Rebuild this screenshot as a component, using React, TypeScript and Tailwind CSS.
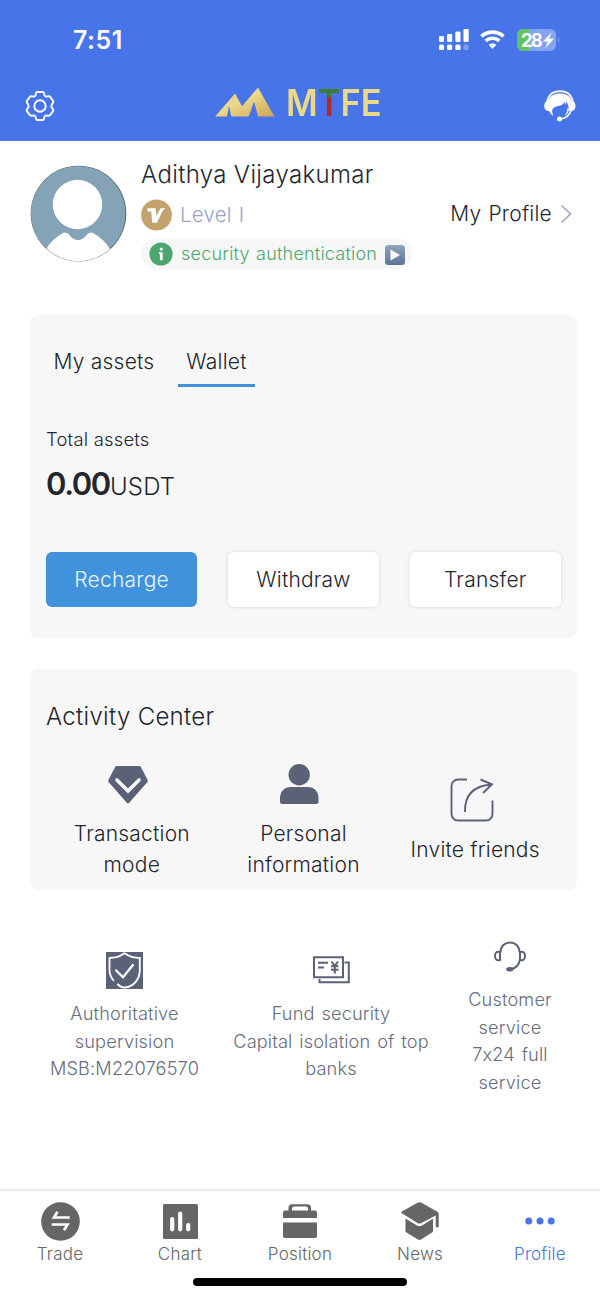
import type { ReactNode } from "react";

const actions = ["Recharge", "Withdraw", "Transfer"];

const activities = [
  { lines: ["Transaction", "mode"], icon: <DiamondIcon /> },
  { lines: ["Personal", "information"], icon: <PersonIcon /> },
  { lines: ["Invite friends"], icon: <ShareIcon /> },
];

const features = [
  {
    lines: ["Authoritative", "supervision", "MSB:M22076570"],
    icon: <ShieldIcon />,
    width: "w-[187px]",
  },
  {
    lines: ["Fund security", "Capital isolation of top", "banks"],
    icon: <BanknoteIcon />,
    width: "w-[226px]",
  },
  {
    lines: ["Customer", "service", "7x24 full", "service"],
    icon: <HeadsetIcon />,
    width: "w-[132px]",
  },
];

const tabs = [
  { label: "Trade", icon: <TradeIcon /> },
  { label: "Chart", icon: <ChartIcon /> },
  { label: "Position", icon: <PositionIcon /> },
  { label: "News", icon: <NewsIcon /> },
  { label: "Profile", icon: <DotsIcon />, active: true },
];

function DiamondIcon() {
  return (
    <svg width="40" height="39" viewBox="0 0 40 39">
      <path
        d="M8.5 1h23l1.2.7L39.7 15 39.5 17 21.2 37.8q-1.2 1.2-2.4 0L.5 17 .3 15 7.3 1.7z"
        fill="#5b6278"
      />
      <path
        d="M9 15 20 26 31 15"
        fill="none"
        stroke="#f7f7f7"
        strokeWidth="3.600"
        strokeLinecap="round"
      />
    </svg>
  );
}

function PersonIcon() {
  return (
    <svg width="39" height="40" viewBox="0 0 39 40" fill="#5b6278">
      <circle cx="19.2" cy="10.7" r="10.7" />
      <path d="M10 23h18.5A10 10 0 0 1 38.500 33v4.500a2.500 2.500 0 0 1-2.500 2.500H2.500A2.500 2.500 0 0 1 0 37.500V33A10 10 0 0 1 10 23z" />
    </svg>
  );
}

function ShareIcon() {
  return (
    <svg
      width="44"
      height="44"
      viewBox="0 0 44 44"
      fill="none"
      stroke="#5b6278"
      strokeWidth="1.9"
    >
      <path d="M17 1.500H8A6.500 6.500 0 0 0 1.500 8v28A6.500 6.500 0 0 0 8 42.500h28A6.500 6.500 0 0 0 42.500 36V22.500" />
      <path d="M15 34C14.500 18 22 8 41.500 6.500M30.500 1.500 42 6.300 33 15" />
    </svg>
  );
}

function ShieldIcon() {
  return (
    <svg width="37" height="37" viewBox="0 0 37 37">
      <path d="M0 0h37v37H0z" fill="#5b6278" />
      <g fill="none" stroke="#fff" strokeWidth="1.800">
        <path d="M8 29C4.800 25.500 3.500 22 3.500 18V6C9 6 14 4.500 18.500 1.300 23 4.500 28 6 33.800 6v12c0 9-6 17-15 17.500-3 .2-5.500-1.500-7.500-3.500" />
        <path d="M9.500 17.800 17 25.300 27.500 12.300" strokeWidth="2.200" />
      </g>
    </svg>
  );
}

function BanknoteIcon() {
  return (
    <svg
      width="37"
      height="28"
      viewBox="0 0 37 28"
      fill="none"
      stroke="#5b6278"
      strokeWidth="2"
    >
      <path d="M1 1.300h29v20H1zM31.500 6.500h4.300v19.700H6.500V23M5 6.800h10M5 11.500h6" />
      <path d="m18.500 5.500 3.300 4.300 3.300-4.300M18 10.300h7.500M18 13.800h7.500M21.800 9.800v7.700" />
    </svg>
  );
}

function HeadsetIcon() {
  return (
    <svg
      width="32"
      height="31"
      viewBox="0 0 32 31"
      fill="none"
      stroke="#5b6278"
      strokeWidth="2"
    >
      <path d="M6.500 11.500C6.500 5 11 1.500 16 1.500s9.500 3.500 9.500 10M26 18.500c-1 5-4 8.500-8.500 9.500" />
      <path d="M6 11v8C2.500 20 1 18 1 15s1.500-5 5-4zM26 11v8c3.500 1 5-1 5-4s-1.500-5-5-4z" />
      <ellipse cx="15.800" cy="28.300" rx="3.600" ry="2.200" fill="#5b6278" stroke="none" />
    </svg>
  );
}

function TradeIcon() {
  return (
    <svg width="39" height="39" viewBox="0 0 39 39">
      <circle cx="19.500" cy="19.500" r="19.300" fill="#666" />
      <path
        d="M28.700 15.500H13L16.500 9.800M10.700 22.500H26.500L23 28.200"
        fill="none"
        stroke="#fff"
        strokeWidth="2.600"
      />
    </svg>
  );
}

function ChartIcon() {
  return (
    <svg width="35" height="35" viewBox="0 0 35 35">
      <rect width="35" height="35" rx="1.500" fill="#666" />
      <path
        d="M9.200 15v10.300M17.200 9.500v15.800M25.200 21v4.300"
        stroke="#fff"
        strokeWidth="4.200"
        strokeLinecap="round"
      />
    </svg>
  );
}

function PositionIcon() {
  return (
    <svg width="34" height="34" viewBox="0 0 34 34" fill="#666">
      <path
        d="M5.500 6.500V4Q5.500.3 9 .3h15.500Q28 .3 28 4v2.500h4q2 0 2 2V14H0V8.500q0-2 2-2zM9 6.500h16V4.800q0-2.300-2-2.300H11.500Q9 2.500 9 4.800z"
        fillRule="evenodd"
      />
      <path d="M0 18.500h34V32q0 2-2 2H2q-2 0-2-2z" />
    </svg>
  );
}

function NewsIcon() {
  return (
    <svg width="38" height="38" viewBox="0 0 38 38" fill="#666">
      <path d="M17 .6q1.500-.8 3 0l16.500 9.200q1.200.7 1.200 2V24q0 1.500-1.500 1.500T34.700 24V13.500L20.500 21q-2 1.200-4 0L.8 11.300q-1.200-1 0-1.700z" />
      <path d="M4.500 16.500 16 23.500q2.500 1.500 5 0l11-7V29q0 1-1 1.600l-11 7q-1.500.8-3 0L5.500 30.600q-1-.6-1-1.600z" />
    </svg>
  );
}

function DotsIcon() {
  return (
    <svg width="30" height="8" viewBox="0 0 30 8" fill="#4874e6">
      <circle cx="3.800" cy="4" r="3.500" />
      <circle cx="15" cy="4" r="3.500" />
      <circle cx="26.200" cy="4" r="3.500" />
    </svg>
  );
}

function SettingsIcon() {
  return (
    <svg
      width="30"
      height="30"
      viewBox="0 0 30 30"
      fill="none"
      stroke="#fff"
      strokeWidth="1.900"
      strokeLinejoin="round"
    >
      <path d="M12.300 1h5.400q1 0 1.200 1l.6 2.300q.3 1 1.500 1.300l2.800-.3q1-.1 1.500.8l2.800 3.800q.6 1-.1 1.800l-1.200 1.700q-.8 1.600 0 3.200l1.200 1.700q.7.800.1 1.800l-2.800 3.800q-.5.900-1.500.8l-2.800-.3q-1.200.3-1.500 1.300l-.6 2.300q-.2 1-1.200 1h-5.400q-1 0-1.200-1l-.6-2.300q-.3-1-1.500-1.300l-2.800.3q-1 .1-1.500-.8l-2.800-3.800q-.6-1 .1-1.800l1.200-1.700q.8-1.600 0-3.200l-1.200-1.700q-.7-.8-.1-1.800l2.800-3.800q.5-.9 1.500-.8l2.800.3q1.200-.3 1.500-1.300l.6-2.300q.2-1 1.200-1z" />
      <circle cx="15" cy="15" r="5.700" />
    </svg>
  );
}

function SupportIcon() {
  return (
    <svg width="32" height="32" viewBox="0 0 32 32">
      <path
        d="M3 12C4.500 5 9 1.200 16 1.200S27.500 5 29 12M27 20.500C25.500 25.500 21.500 28.500 16 29"
        fill="none"
        stroke="#fff"
        strokeWidth="1.700"
      />
      <g fill="#fff">
        <path d="M5 21C1.500 21 .3 18.500.3 15.700S1.800 11 4.200 10.500C6 6 10.500 3.500 16 3.500S26 6 27.500 10.500c2.500.5 4 2.400 4 5.200S30.500 21 27 21l-2.500-.5q.8-4.500-2.300-9l-1 3.500q-.7-1.500-.7-3.500-1.500 4-6.500 4.500-3.500.5-5.500 3-1 2.500 1 7-3.500-2.500-4.500-5z" />
        <path d="M24.800 19q0 4-4 7 2.800-4 2.700-8z" />
        <circle cx="15.500" cy="29" r="2.500" />
      </g>
    </svg>
  );
}

function StatusIcons() {
  return (
    <svg className="mb-0.5" width="122" height="24" viewBox="0 0 122 24" fill="#fff">
      <rect x="1" y="8" width="5" height="6" rx="1.200" />
      <rect x="9" y="6" width="5.200" height="8" rx="1.200" />
      <rect x="17.300" y="3.500" width="5.200" height="10.500" rx="1.200" />
      <rect x="25.500" y="1" width="5.200" height="13" rx="1.200" />
      <rect x="1" y="16.500" width="5" height="5.500" rx="1.500" />
      <rect x="9" y="16.500" width="5.200" height="5.500" rx="1.500" />
      <rect x="17.300" y="16.500" width="5.200" height="5.500" rx="1.500" />
      <rect x="25.500" y="16.500" width="5.200" height="5.500" rx="1.500" opacity=".3" />
      <g fill="none" stroke="#fff" strokeWidth="3.600">
        <path d="M43.500 8.300a16.500 16.500 0 0 1 22 0M47.700 12.900a10.200 10.200 0 0 1 13.600 0" />
      </g>
      <path d="M50.700 16.800a6 6 0 0 1 7.600 0l-3.800 4.200z" />
      <rect x="79" y="1" width="39" height="22" rx="6" opacity=".35" />
      <path d="M85 1h6v22h-6a6 6 0 0 1-6-6V7a6 6 0 0 1 6-6z" fill="#62c466" />
      <path d="M120 9q2 3 0 6z" opacity=".4" />
      <text x="83" y="18.700" fontSize="18.500" fontWeight="700" textLength="22">
        28
      </text>
      <path d="M113.500 4.500 105 13.500h4.800L107.500 20l8.500-9.200h-4.800z" />
    </svg>
  );
}

function Logo() {
  return (
    <div className="mb-[9px] flex items-center">
      <svg width="60" height="30" viewBox="0 0 60 30">
        <defs>
          <linearGradient id="gold" x1="0" y1="0" x2="1" y2="1">
            <stop offset="0" stopColor="#e3c872" />
            <stop offset=".45" stopColor="#ecd98a" />
            <stop offset="1" stopColor="#cda253" />
          </linearGradient>
        </defs>
        <path
          d="M.2 29.500 20 6.500l7 12.800L43 .5l16.500 29H43L39 14.500 33.800 29.500H16.300l-2.300-11-2 11z"
          fill="url(#gold)"
        />
      </svg>
      <div className="ml-[11px] w-[98px] pt-0.5">
        <div className="flex origin-left scale-x-[0.93] text-[37px] leading-[30px] font-semibold tracking-normal text-[#ead989]">
          <span>M</span>
          <span className="bg-linear-to-b from-[#3d7d32] from-[29%] to-[#b52a24] to-[29%] bg-clip-text text-transparent">
            T
          </span>
          <span>F</span>
          <span>E</span>
        </div>
      </div>
    </div>
  );
}

function Avatar() {
  return (
    <svg className="mb-0.5" width="97" height="97" viewBox="0 0 97 97">
      <defs>
        <clipPath id="face">
          <circle cx="48.500" cy="48.500" r="47.500" />
        </clipPath>
      </defs>
      <circle cx="48.500" cy="48.500" r="47.800" fill="#4d5964" />
      <g clipPath="url(#face)">
        <circle cx="48" cy="48.500" r="47.500" fill="#84a3b7" />
        <circle cx="47.500" cy="39.500" r="24.700" fill="#fff" />
        <path
          d="M12 97 16 84Q22 74 33 68q3-1.500 5.500 1Q43 75 48 75t9.500-6q2.500-2.500 5.500-1 11 6 17 16l4 13z"
          fill="#fff"
        />
      </g>
    </svg>
  );
}

function Header() {
  return (
    <header className="h-[141px] bg-[#4874ea] text-white">
      <div className="flex h-20 items-center justify-between pt-0.5 pr-10 pl-[73px]">
        <span className="text-[25px] font-semibold tracking-[0.5px]">7:51</span>
        <StatusIcons />
      </div>
      <div className="flex h-[52px] items-center justify-between pr-6 pl-[25px]">
        <SettingsIcon />
        <Logo />
        <SupportIcon />
      </div>
    </header>
  );
}

function UserInfo() {
  return (
    <section className="flex h-[128px] items-center pt-[18px] pr-7 pl-[30px]">
      <Avatar />
      <div className="ml-3.5">
        <h1 className="text-2xl leading-8 tracking-[0.35px] whitespace-nowrap">
          Adithya Vijayakumar
        </h1>
        <div className="mt-2 flex h-8 items-center gap-2">
          <svg width="31" height="32" viewBox="0 0 31 32">
            <circle cx="15.500" cy="16" r="15.400" fill="#c3a26d" />
            <path
              d="M6.500 9.300h8l.8 7.700 4.200-7.700h5.200q-2.300 1-3.700 4L16 23.700h-4.800l-1-11.200H6.500z"
              fill="#fff"
            />
          </svg>
          <span className="text-[20.500px] leading-8 text-[#98a2c5] [word-spacing:1px]">
            Level I
          </span>
        </div>
        <div className="mt-[7px] flex h-[31px] w-[271px] items-center rounded-full bg-[#f7f7f7] pl-2">
          <svg width="24" height="24" viewBox="0 0 24 24">
            <circle cx="12" cy="12" r="11.600" fill="#4ba76d" />
            <circle cx="12.300" cy="7" r="1.600" fill="#fff" />
            <path d="M10 10.300h3.700v8h-2.800v-6.300H10z" fill="#fff" />
          </svg>
          <span className="ml-2 text-[18px] leading-7 whitespace-nowrap text-[#4ba76d] [word-spacing:1px]">
            security authentication
          </span>
          <svg className="mt-0.5 ml-2" width="20" height="20" viewBox="0 0 20 20">
            <defs>
              <linearGradient id="play" x1="0" y1="0" x2="0" y2="1">
                <stop offset="0" stopColor="#8fa4bd" />
                <stop offset="1" stopColor="#5d7494" />
              </linearGradient>
            </defs>
            <rect width="20" height="20" rx="3.500" fill="url(#play)" />
            <path d="M5.500 4.500 15 10l-9.500 5.500z" fill="#fff" />
          </svg>
        </div>
      </div>
      <a className="ml-auto flex items-center gap-2 text-[21px] whitespace-nowrap [word-spacing:1px]">
        My Profile
        <svg width="12" height="20" viewBox="0 0 12 20">
          <path d="m1.500 1.500 9 8.500-9 8.500" fill="none" stroke="#98a5bd" strokeWidth="1.500" />
        </svg>
      </a>
    </section>
  );
}

function Wallet() {
  return (
    <section className="mt-[46px] ml-[30px] h-[323px] w-[547px] rounded-lg bg-[#f7f7f7] px-4 pt-[30px]">
      <div className="flex gap-4 text-[21px] leading-8">
        <button className="h-[42px] w-[116px] border-b border-[#f9f9f9] pb-[7px]">My assets</button>
        <button className="h-[42px] w-[77px] border-b-3 border-[#4192dc] pb-[5px]">Wallet</button>
      </div>
      <p className="mt-[38px] text-[18.400px] leading-7">Total assets</p>
      <p className="mt-[11px] h-10 text-2xl leading-10">
        <b className="text-[31px] font-semibold tracking-[-1.400px]">0.00</b>USDT
      </p>
      <div className="mt-12 grid grid-cols-3 gap-[30.500px]">
        {actions.map((action) => (
          <button
            key={action}
            className={
              action === "Recharge"
                ? "h-[55px] rounded-md bg-[#4192dc] text-[21px] text-[#e9f8ff]"
                : "h-[55px] rounded-md bg-white text-[21px] shadow-[0_0_4px_rgba(0,0,0,0.12)]"
            }
          >
            {action}
          </button>
        ))}
      </div>
    </section>
  );
}

function IconColumn({ icon, children }: { icon: ReactNode; children: ReactNode }) {
  return (
    <div className="flex flex-col items-center text-center">
      {icon}
      <div>{children}</div>
    </div>
  );
}

function ActivityCenter() {
  return (
    <section className="mt-[31px] ml-[30px] h-[221px] w-[547px] rounded-lg bg-[#f7f7f7] px-4 pt-8">
      <h2 className="text-2xl leading-8 tracking-[0.3px]">Activity Center</h2>
      <div className="mt-[29px] grid grid-cols-3 items-center">
        {activities.map(({ lines, icon }) => (
          <IconColumn
            key={lines[0]}
            icon={<div className="mr-[7px] mb-3 flex h-11 items-center">{icon}</div>}
          >
            {lines.map((line) => (
              <p key={line} className="text-[21px] leading-[31px] whitespace-nowrap">
                {line}
              </p>
            ))}
          </IconColumn>
        ))}
      </div>
    </section>
  );
}

function Features() {
  return (
    <section className="mt-12 ml-[31px] flex w-[547px] items-center">
      {features.map(({ lines, icon, width }) => (
        <div key={lines[0]} className={width}>
          <IconColumn icon={<div className="mb-[11px] flex h-[37px] items-center">{icon}</div>}>
            {lines.map((line, i) => (
              <p
                key={i}
                className="text-[18.200px] leading-[27.700px] tracking-[0.15px] whitespace-nowrap text-[#686d7c] [word-spacing:1.500px]"
              >
                {line}
              </p>
            ))}
          </IconColumn>
        </div>
      ))}
    </section>
  );
}

function TabBar() {
  return (
    <nav className="mt-auto h-[107px] shrink-0 bg-white shadow-[0_-1px_3px_rgba(0,0,0,0.15)]">
      <div className="grid grid-cols-5 pt-2.5">
        {tabs.map(({ label, icon, active }) => (
          <a
            key={label}
            className={
              active
                ? "flex flex-col items-center text-[17px] text-[#4874e6]"
                : "flex flex-col items-center text-[17px] text-[#666]"
            }
          >
            <span className="flex h-10 items-center">{icon}</span>
            <span className="mt-px leading-6">{label}</span>
          </a>
        ))}
      </div>
      <div className="mx-auto mt-3 h-2 w-[214px] rounded-full bg-black" />
    </nav>
  );
}

export default function App() {
  return (
    <div className="flex h-[1298px] w-[600px] flex-col overflow-hidden bg-white font-['Inter','Liberation_Sans',sans-serif] font-[360] tracking-[0.22px] text-[#24262d] [font-feature-settings:'calt'_0]">
      <Header />
      <UserInfo />
      <Wallet />
      <ActivityCenter />
      <Features />
      <TabBar />
    </div>
  );
}
